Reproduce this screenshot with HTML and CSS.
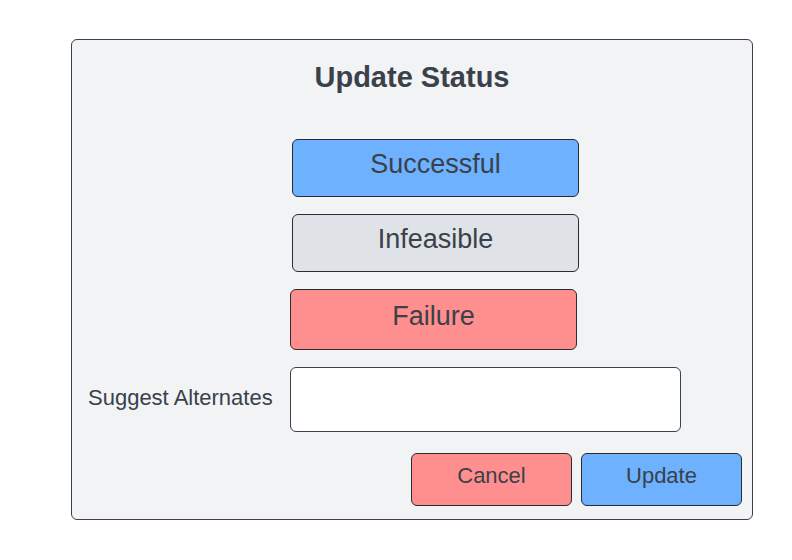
FILE: index.html
```html
<!DOCTYPE html>
<html lang="en">
<head>
<meta charset="utf-8">
<title>Update Status</title>
<link rel="stylesheet" href="styles.css">
</head>
<body>
<form class="dialog">
  <h1 class="title">Update Status</h1>
  <div class="choices">
    <button class="button choice blue" type="button">Successful</button>
    <button class="button choice grey" type="button">Infeasible</button>
    <button class="button choice failure red" type="button">Failure</button>
  </div>
  <div class="field">
    <label class="label" for="alternates">Suggest Alternates</label>
    <input class="input" id="alternates" type="text">
  </div>
  <div class="actions">
    <button class="button action red" type="button">Cancel</button>
    <button class="button action blue" type="button">Update</button>
  </div>
</form>
</body>
</html>
```

FILE: styles.css
```css
* {
  box-sizing: border-box;
}

body {
  margin: 0;
  padding: 39px 39px 40px 71px;
  background: #fff;
  color: #3a414a;
  font-family: "Liberation Sans", Arial, sans-serif;
}

.dialog {
  display: flex;
  flex-direction: column;
  padding: 21px 10px 13px 16px;
  border: 1px solid #3a414a;
  border-radius: 6px;
  background: #f1f3f5;
}

.title {
  margin: 0 0 46px;
  padding-right: 6px;
  font-size: 29px;
  line-height: 32px;
  text-align: center;
}

.choices {
  display: grid;
  gap: 17px;
  width: 287px;
  margin-left: 204px;
}

.button {
  border: 1px solid #282c33;
  border-radius: 6px;
  color: inherit;
  font-family: inherit;
}

.choice {
  height: 58px;
  padding: 0 0 8px;
  font-size: 27px;
}

.failure {
  height: 61px;
  margin: 0 2px 0 -2px;
  padding-bottom: 6px;
}

.blue {
  background: #6db1ff;
}

.grey {
  background: #dfe3e8;
}

.red {
  background: #ff8f8e;
}

.field {
  display: grid;
  grid-template-columns: 202px 1fr;
  align-items: center;
  margin: 17px 61px 21px 0;
}

.label {
  padding-bottom: 4px;
  font-size: 22px;
  line-height: 26px;
}

.input {
  width: 100%;
  height: 65px;
  padding: 0 12px;
  border: 1px solid #3a414a;
  border-radius: 6px;
  background: #fff;
  color: inherit;
  font: inherit;
  font-size: 22px;
}

.action {
  width: 161px;
  height: 53px;
  padding: 0 0 8px;
  font-size: 22px;
}

.actions {
  display: flex;
  justify-content: flex-end;
  gap: 9px;
}
```
